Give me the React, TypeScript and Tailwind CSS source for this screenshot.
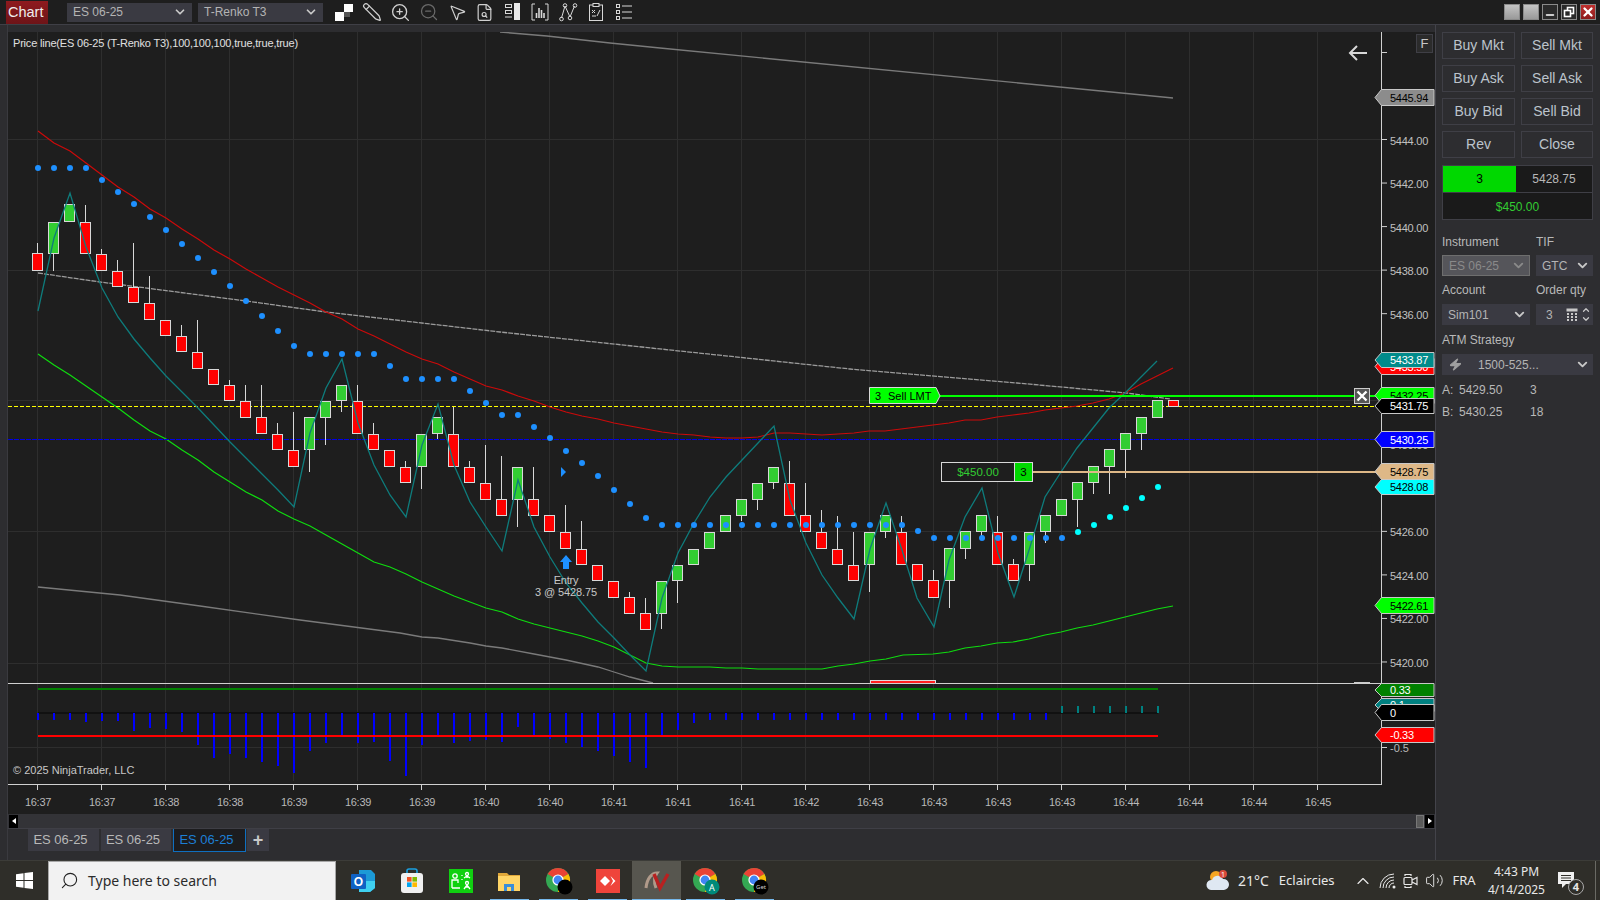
import React from "react";
import {
  ChevronDown, ChevronUp, Pencil, ZoomIn, ZoomOut, MousePointer2, FileSearch, Zap, Search, ChevronUp as Caret, Volume2, X, Minus,
} from "lucide-react";

type Bar = [string, number, number, number?, number?];
const bars: Bar[] = [
  ["r",253,270,243],["g",222,253,0,271],["g",204,221],["r",222,253,205],["r",254,270,249],["r",271,286,260],["r",287,302,243],["r",303,319,276],
  ["r",320,335],["r",336,351,325],["r",352,368,320],["r",369,384],["r",385,400,380],["r",401,417,385],["r",417,433,385],["r",434,449,423],
  ["r",450,466,412],["g",417,449,0,472],["g",401,417,0,445],["g",385,400,0,412],["r",401,433,385],["r",434,449,423],["r",450,466],["r",467,482,461],
  ["g",434,466,0,489],["g",417,433,0,439],["r",434,466,407],["r",467,482,461],["r",483,499,445],["r",499,515,456],["g",467,499,0,527],["r",499,515,467],
  ["r",515,531],["r",532,548,505],["r",549,564,521],["r",565,580],["r",581,597],["r",597,613,592],["r",613,629,598],["g",581,613,0,629],
  ["g",565,580,0,603],["g",549,564],["g",532,548],["g",515,531],["g",499,515,0,521],["g",483,499,0,510],["g",467,482,0,489],["r",483,515,461],
  ["r",515,531,483],["r",532,548,510],["r",549,564,516],["r",565,580,532],["g",532,564,0,592],["g",515,531,0,538],["r",532,564,516],["r",564,580],
  ["r",580,597,570],["g",548,580,0,608],["g",531,548,0,559],["g",515,531,0,536],["r",532,564,516],["r",564,580,559],["g",532,564,0,581],["g",515,531,0,543],
  ["g",499,515],["g",482,499,0,527],["g",466,482,0,494],["g",449,466,0,494],["g",433,449,0,478],["g",417,433,0,450],["g",400,417],["r",400,406],
];

const rep = (v: number, n: number) => Array.from({ length: n }, () => v);
const dots = [
  ...rep(168,4),180,192,204,217,230,244,258,272,286,301,316,331,346,...rep(354,5),366,...rep(379,4),391,403,415,415,427,438,451,463,476,490,504,518,
  ...rep(525,16),531,...rep(538,9),
];
const cyanDots: [number, number][] = [[1078,532],[1094,525],[1110,517],[1126,508],[1142,498],[1158,487]];

const redLine = "38,131 54,143 70,151 86,163 102,175 118,187 134,197 150,209 166,218 182,229 198,239 214,250 230,259 246,269 262,278 278,287 294,295 310,303 326,312 342,319 358,329 374,336 390,344 406,352 422,359 438,364 454,372 470,379 486,386 502,390 518,396 534,401 550,407 566,412 582,416 598,419 614,423 630,426 646,429 662,432 678,434 694,435 710,437 726,438 742,438 758,437 774,433 790,433 806,434 822,435 838,434 854,433 869,431 885,431 901,429 917,427 933,425 949,423 965,420 981,420 997,417 1013,415 1029,413 1045,410 1061,408 1077,406 1093,403 1109,399 1125,393 1141,384 1157,376 1173,368";
const tealLine = "38,311 54,238 70,193 86,247 102,288 118,317 134,339 150,358 166,376 182,392 198,408 214,425 230,442 246,458 262,474 278,490 294,507 310,433 326,388 342,359 358,423 374,465 390,495 406,517 422,445 438,404 454,465 470,502 486,527 502,551 518,480 534,527 550,557 566,583 582,603 598,622 614,638 630,655 646,671 662,598 678,553 694,523 710,497 726,477 742,460 758,443 774,426 790,500 806,543 822,575 838,598 854,619 870,549 886,503 902,550 917,598 934,627 949,560 965,517 982,488 998,553 1014,597 1030,547 1045,497 1061,472 1077,448 1093,428 1109,408 1125,393 1141,377 1157,361";
const greenLine = "38,354 54,365 70,375 86,386 102,397 118,408 134,420 150,431 166,439 182,450 198,460 214,472 230,482 246,492 262,500 278,511 294,519 310,526 326,535 342,544 358,553 374,562 390,567 406,574 422,582 438,589 454,596 470,602 486,608 502,612 518,619 534,624 550,628 566,632 582,636 598,641 614,647 630,655 646,663 662,666 678,667 710,667 726,668 742,668 758,669 822,669 838,666 854,664 870,661 886,659 903,655 933,654 949,652 965,648 981,646 997,643 1013,642 1029,639 1045,635 1061,632 1077,628 1093,625 1109,621 1125,617 1141,613 1157,609 1173,606";
const greyLow = "38,587 120,595 200,606 300,620 400,633 422,637 438,638 470,643 486,646 502,648 534,654 566,660 598,667 614,672 630,677 653,683";

const hist = [720,720,720,722,721,721,731,728,729,732,745,758,754,758,762,766,773,751,743,736,743,742,761,776,745,735,743,741,740,742,727,735,739,743,747,751,756,762,768,737,730,723];

const priceY = (p: number) => 139.5 + (5444 - p) * 21.77;
const times = ["16:37","16:37","16:38","16:38","16:39","16:39","16:39","16:40","16:40","16:41","16:41","16:41","16:42","16:43","16:43","16:43","16:43","16:44","16:44","16:44","16:45"];
const ticks = [5444,5442,5440,5438,5436,5434,5432,5430,5428,5426,5424,5422,5420];
const gridX = times.map((_, i) => 37.5 + 64 * i);

const tags: [number, number, string, string, string][] = [
  [89,106,"#8c8c8c","#000","5445.94"],
  [358,375,"#ff0000","#fff","5433.50"],
  [352,368,"#008b8b","#fff","5433.87"],
  [387,404,"#00ff00","#000","5432.25"],
  [398,414,"#000000","#fff","5431.75"],
  [431,448,"#0000ff","#fff","5430.25"],
  [463,480,"#deb887","#000","5428.75"],
  [479,495,"#00ffff","#000","5428.08"],
  [597,614,"#00ff00","#000","5422.61"],
  [683,697,"#008000","#fff","0.33"],
  [698,712,"#008080","#fff","0.1"],
  [704,721,"#000000","#fff","0"],
  [727,743,"#ff0000","#fff","-0.33"],
];

function Chart() {
  return (
    <svg viewBox="8 32 1427 782" className="block h-[782px] w-[1427px] bg-[#1e1e1e] text-[11px]">
      {gridX.map((x) => (
        <line key={x} x1={x} x2={x} y1={32} y2={781} stroke="#2e2e2e" />
      ))}
      {[139.5, 270.5, 400.5, 531.5, 663.5, 747.5].map((y) => (
        <line key={y} x1={8} x2={1381} y1={y} y2={y} stroke="#2e2e2e" />
      ))}
      <polyline points="500,32 547,36 610,43 660,48 1173,98" fill="none" stroke="#7a7a7a" strokeWidth={1.4} />
      <polyline points="38,273 100,282 246,301 326,312 500,332 850,369 1017,383 1127,393 1170,399" fill="none" stroke="#9c9c9c" strokeWidth={1.3} strokeDasharray="5 1" />
      <polyline points={greyLow} fill="none" stroke="#7a7a7a" strokeWidth={1.3} />
      <polyline points={greenLine} fill="none" stroke="#0fdc0f" strokeWidth={1.2} />

      <line x1={8} x2={1381} y1={439.5} y2={439.5} stroke="#0000e6" strokeDasharray="5 1" />
      <line x1={8} x2={1381} y1={406.5} y2={406.5} stroke="#ffff00" strokeDasharray="4 2" />

      {bars.map(([c, top, bot, wt, wb], i) => {
        const cx = 37.5 + 16 * i;
        return (
          <g key={i}>
            {wt ? <line x1={cx} x2={cx} y1={wt} y2={top} stroke="#d8d8d8" /> : null}
            {wb ? <line x1={cx} x2={cx} y1={bot} y2={wb} stroke="#d8d8d8" /> : null}
            <rect x={cx - 5} y={top + 0.5} width={10} height={bot - top} fill={c === "r" ? "#ff0000" : "#32cd32"} stroke="#d8d8d8" />
          </g>
        );
      })}

      <polyline points={redLine} fill="none" stroke="#cc0a0a" strokeWidth={1.2} />
      <polyline points={tealLine} fill="none" stroke="#0e7c7c" strokeWidth={1.3} />

      {dots.map((y, i) => (
        <circle key={i} cx={38 + 16 * i} cy={y} r={3} fill="#1e90ff" />
      ))}
      {cyanDots.map(([x, y]) => (
        <circle key={x} cx={x} cy={y} r={3} fill="#00ffff" />
      ))}

      <polygon points="561,467 566,472 561,477" fill="#1e90ff" />
      <polygon points="566,555 572,562 569,562 569,569 563,569 563,562 560,562" fill="#1e90ff" />
      <text x={566} y={584} textAnchor="middle" fill="#c8c8c8" className="tracking-[-0.2px]">Entry</text>
      <text x={566} y={596} textAnchor="middle" fill="#c8c8c8" className="tracking-[-0.1px]">3 @ 5428.75</text>

      <line x1={940} x2={1381} y1={396} y2={396} stroke="#00ff00" strokeWidth={2} />
      <polygon points="869.5,387.5 936,387.5 940,396 936,403.5 869.5,403.5" fill="#00ff00" stroke="#d8d8d8" />
      <text x={875} y={399.5} fill="#000" className="text-[11px]">3</text>
      <text x={888} y={399.5} fill="#000" className="text-[11px]">Sell LMT</text>

      <line x1={1033} x2={1381} y1={472} y2={472} stroke="#deb887" strokeWidth={2} />
      <rect x={941.5} y={462.5} width={73} height={19} fill="#1e1e1e" stroke="#d8d8d8" />
      <rect x={1014.5} y={462.5} width={18} height={19} fill="#00d800" stroke="#d8d8d8" />
      <text x={978} y={476} textAnchor="middle" fill="#32cd32" className="text-[11.5px]">$450.00</text>
      <text x={1023.5} y={476} textAnchor="middle" fill="#000" className="text-[11.5px]">3</text>

      <rect x={1354.5} y={388.5} width={15} height={15} fill="#555" stroke="#ccc" />
      <path d="M1357.5 391.5 L1366.5 400.5 M1366.5 391.5 L1357.5 400.5" stroke="#fff" strokeWidth={2.4} />

      <text x={13} y={47} fill="#e0e0e0" className="tracking-[-0.19px]">Price line(ES 06-25 (T-Renko T3),100,100,100,true,true,true)</text>

      {/* sub panel */}
      <rect x={870.5} y={680.5} width={65} height={3} fill="#ff2020" stroke="#ddd" />
      <rect x={1354} y={682} width={16} height={1.5} fill="#ccc" />
      <line x1={8} x2={1381} y1={683.5} y2={683.5} stroke="#d0d0d0" />
      <line x1={38} x2={1158} y1={689} y2={689} stroke="#008000" strokeWidth={2} />
      <line x1={38} x2={1158} y1={713} y2={713} stroke="#111" strokeWidth={2} />
      {hist.map((y, i) => (
        <rect key={i} x={37 + 16 * i} y={713} width={2} height={y - 713} fill="#0000ff" />
      ))}
      {Array.from({ length: 22 }, (_, i) => (
        <rect key={i} x={709 + 16 * i} y={713} width={2} height={7} fill="#0000ff" />
      ))}
      {Array.from({ length: 7 }, (_, i) => (
        <rect key={i} x={1061 + 16 * i} y={706} width={2} height={7} fill="#008080" />
      ))}
      <line x1={38} x2={1158} y1={736} y2={736} stroke="#ff0000" strokeWidth={2} />
      <text x={13} y={774} fill="#c8c8c8">© 2025 NinjaTrader, LLC</text>

      {/* axes */}
      <line x1={1381.5} x2={1381.5} y1={32} y2={785} stroke="#d0d0d0" />
      <line x1={8} x2={1382} y1={784.5} y2={784.5} stroke="#d0d0d0" />
      {gridX.map((x) => (
        <line key={x} x1={x} x2={x} y1={785} y2={790} stroke="#d0d0d0" />
      ))}
      {times.map((t, i) => (
        <text key={i} x={gridX[i] + 0.5} y={806} textAnchor="middle" fill="#b8b8b8" className="tracking-[-0.3px]">{t}</text>
      ))}
      <line x1={1382} x2={1387} y1={52.5} y2={52.5} stroke="#d0d0d0" />
      <line x1={1382} x2={1387} y1={747.5} y2={747.5} stroke="#d0d0d0" />
      <text x={1390} y={752} fill="#b8b8b8">-0.5</text>
      {ticks.map((p) => {
        const y = priceY(p);
        return (
          <g key={p}>
            <line x1={1382} x2={1387} y1={y} y2={y} stroke="#d0d0d0" />
            <text x={1390} y={y + 5} fill="#c0c0c0" className="tracking-[-0.25px]">{p.toFixed(2)}</text>
          </g>
        );
      })}
      {tags.map(([t, b, fill, color, label]) => (
        <g key={label}>
          <polygon points={`1375,${(t + b) / 2} 1381.5,${t + 0.5} 1434,${t + 0.5} 1434,${b - 0.5} 1381.5,${b - 0.5}`} fill={fill} stroke="#c8c8c8" />
          <text x={1390} y={(t + b) / 2 + 4} fill={color} className="tracking-[-0.25px]">{label}</text>
        </g>
      ))}
      {/* arrow + F */}
      <rect x={1416.5} y={34.5} width={16} height={18} fill="#2b2b2b" stroke="#3f3f46" />
      <text x={1424.5} y={48} textAnchor="middle" fill="#c8c8c8" className="text-[13px]">F</text>
      <path d="M1367 53 H1350 M1357 46 L1350 53 L1357 60" fill="none" stroke="#d8d8d8" strokeWidth={2} />
    </svg>
  );
}

function Dropdown({ label, w }: { label: string; w: string }) {
  return (
    <div className={`flex h-[19px] items-center justify-between bg-[#3a3a42] pl-[6px] pr-[5px] text-[12px] text-[#b4b4b4] ${w}`}>
      <span>{label}</span>
      <ChevronDown size={14} strokeWidth={3} className="text-[#c8c8c8]" />
    </div>
  );
}

function ToolIcons() {
  const c = "shrink-0";
  return (
    <div className="ml-[11px] flex items-center gap-[8px] text-[#d0d0d0]">
      <svg width="20" height="20" viewBox="0 0 20 20" className={c}><rect x="1" y="10" width="9" height="9" fill="#fff" /><rect x="10" y="2" width="9" height="8" fill="#fff" /><rect x="10" y="10" width="6" height="5" fill="#555" /></svg>
      <Pencil size={20} strokeWidth={1.5} className="-scale-x-100" />
      <ZoomIn size={21} strokeWidth={1.5} />
      <ZoomOut size={20} strokeWidth={1.5} className="text-[#6a6a6a]" />
      <MousePointer2 size={19} strokeWidth={1.5} className="ml-[1px]" />
      <FileSearch size={19} strokeWidth={1.5} />
      <svg width="20" height="20" viewBox="0 0 20 20" className={c} fill="none" stroke="#d8d8d8"><rect x="3.5" y="2.5" width="6" height="3" /><rect x="3.5" y="8.5" width="6" height="3" /><path d="M3 15 h7" /><rect x="12" y="1" width="6" height="17" fill="#e8e8e8" stroke="none" /></svg>
      <svg width="20" height="20" viewBox="0 0 20 20" className={c} fill="none" stroke="#d8d8d8"><path d="M5 2 H2 V18 H5 M15 2 H18 V18 H15" /><path d="M6.5 16 V11 M9 16 V6 M11.5 16 V8 M14 16 V11" strokeWidth="1.6" /></svg>
      <svg width="20" height="20" viewBox="0 0 20 20" className={c} fill="none" stroke="#d8d8d8"><path d="M3.5 16 L7 4 L12 15 L16.5 4" /><circle cx="3.5" cy="17" r="1.8" /><circle cx="7" cy="3.5" r="1.8" /><circle cx="12" cy="16" r="1.8" /><circle cx="17" cy="3.5" r="1.8" /></svg>
      <svg width="20" height="20" viewBox="0 0 20 20" className={c} fill="none" stroke="#d8d8d8"><rect x="3.5" y="3" width="13" height="15.5" /><rect x="7" y="1.5" width="6" height="3" fill="#1e1e1e" /><path d="M6 8 L9 11 M9 8 L6 11 M11 14 L14 8 M6 14 H10" /></svg>
      <svg width="20" height="20" viewBox="0 0 20 20" className={c} fill="none" stroke="#d8d8d8"><rect x="2.5" y="2.5" width="3" height="3" /><rect x="2.5" y="8.5" width="3" height="3" /><rect x="2.5" y="14.5" width="3" height="3" /><path d="M8 4 H18 M8 10 H18 M8 16 H18" /></svg>
    </div>
  );
}

function WinControls() {
  const b = "flex h-[16px] w-[16px] items-center justify-center border border-[#8a8a8a]";
  return (
    <div className="ml-auto mr-[4px] flex gap-[3px]">
      <div className={`${b} bg-gradient-to-b from-[#c4c4c4] to-[#9a9a9a]`} />
      <div className={`${b} bg-gradient-to-b from-[#c4c4c4] to-[#9a9a9a]`} />
      <div className={`${b} bg-[#2a2a2a]`}><Minus size={12} strokeWidth={3} className="mt-[5px] text-white" /></div>
      <div className={`${b} bg-[#2a2a2a]`}>
        <svg width="12" height="12" viewBox="0 0 12 12" fill="none" stroke="#fff" strokeWidth="1.6"><rect x="4.5" y="1.5" width="6" height="6" /><rect x="1.5" y="4.5" width="6" height="6" fill="#2a2a2a" /></svg>
      </div>
      <div className={`${b} bg-gradient-to-b from-[#c0302e] to-[#8c1c1c]`}><X size={14} strokeWidth={4} className="text-white" /></div>
    </div>
  );
}

function TradeBtn({ t }: { t: string }) {
  return (
    <div className="flex h-[27px] items-center justify-center border border-[#3f3f46] text-[14px] text-[#bcc4cc]">{t}</div>
  );
}

function Select({ label, w, dim }: { label: string; w: string; dim?: boolean }) {
  return (
    <div className={`flex h-[21px] items-center justify-between pl-[6px] pr-[3px] text-[12px] ${w} ${dim ? "border border-[#6e6e6e] bg-[#55555a] text-[#8a8a8a]" : "bg-[#3a3a42] text-[#b4b4b4]"}`}>
      <span>{label}</span>
      <ChevronDown size={15} strokeWidth={3} className={dim ? "text-[#8a8a8a]" : "text-[#c8c8c8]"} />
    </div>
  );
}

function RightPanel() {
  return (
    <aside className="flex w-[165px] shrink-0 flex-col border-l border-[#43434a] bg-[#2d2d30] pl-[6px] pr-[7px] pt-[7px] text-[12px] text-[#b8b8b8]">
      <div className="grid grid-cols-[73px_72px] gap-x-[6px] gap-y-[6px]">
        {["Buy Mkt", "Sell Mkt", "Buy Ask", "Sell Ask", "Buy Bid", "Sell Bid", "Rev", "Close"].map((t) => (
          <TradeBtn key={t} t={t} />
        ))}
      </div>
      <div className="mt-[7px] h-[55px] w-[151px] border border-[#3f3f46]">
        <div className="flex h-[27px] border-b border-[#3f3f46] text-[12px]">
          <div className="flex w-[73px] items-center justify-center bg-[#00d800] text-black">3</div>
          <div className="flex flex-1 items-center justify-center bg-[#1a1a1a] text-[#b8b8b8]">5428.75</div>
        </div>
        <div className="flex h-[26px] items-center justify-center bg-[#1a1a1a] pt-[2px] text-[#32cd32]">$450.00</div>
      </div>
      <div className="mt-[15px] flex gap-[6px] leading-[14px]"><span className="w-[88px]">Instrument</span><span>TIF</span></div>
      <div className="mt-[6px] flex gap-[6px]"><Select label="ES 06-25" w="w-[88px]" dim /><Select label="GTC" w="w-[57px]" /></div>
      <div className="mt-[7px] flex gap-[6px] leading-[14px]"><span className="w-[88px]">Account</span><span>Order qty</span></div>
      <div className="mt-[7px] flex gap-[6px]">
        <Select label="Sim101" w="w-[88px]" />
        <div className="flex h-[21px] w-[57px] items-center bg-[#3a3a42] pl-[10px] pr-[2px] text-[#b4b4b4]">
          <span className="mr-auto">3</span>
          <svg width="12" height="13" viewBox="0 0 12 13" fill="#c8c8c8"><rect x="0.5" y="0.5" width="11" height="3" /><path d="M1 5h2v2H1zM5 5h2v2H5zM9 5h2v2H9zM1 8h2v2H1zM5 8h2v2H5zM9 8h2v2H9zM1 11h2v2H1zM5 11h2v2H5zM9 11h2v2H9z" /></svg>
          <div className="ml-[3px] flex flex-col">
            <ChevronUp size={10} strokeWidth={3} className="-mb-[1px] text-[#c8c8c8]" />
            <ChevronDown size={10} strokeWidth={3} className="text-[#c8c8c8]" />
          </div>
        </div>
      </div>
      <div className="mt-[8px] leading-[14px]">ATM Strategy</div>
      <div className="mt-[7px] flex h-[21px] w-[151px] items-center bg-[#3a3a42] pl-[7px] pr-[3px] text-[#b4b4b4]">
        <Zap size={13} className="-skew-x-12 fill-[#a0a0a0] text-[#a0a0a0]" />
        <span className="ml-[16px] text-[12px]">1500-525...</span>
        <ChevronDown size={15} strokeWidth={3} className="ml-auto text-[#c8c8c8]" />
      </div>
      <div className="mt-[8px] flex h-[14px] items-center"><span className="w-[17px]">A:</span><span className="w-[71px]">5429.50</span><span>3</span></div>
      <div className="mt-[8px] flex h-[14px] items-center"><span className="w-[17px]">B:</span><span className="w-[71px]">5430.25</span><span>18</span></div>
    </aside>
  );
}

function ChromeIcon({ children }: { children?: React.ReactNode }) {
  return (
    <svg width="28" height="28" viewBox="0 0 28 28">
      <circle cx="13" cy="13" r="12" fill="#34a853" />
      <path d="M13 13 L2.6 7 A12 12 0 0 1 23.4 7 Z" fill="#ea4335" />
      <path d="M13 13 L23.4 7 A12 12 0 0 1 13 25 Z" fill="#fbbc05" />
      <circle cx="13" cy="13" r="5.6" fill="#fff" />
      <circle cx="13" cy="13" r="4.4" fill="#4285f4" />
      {children}
    </svg>
  );
}

function TaskIcon({ children, on, hi }: { children: React.ReactNode; on?: boolean; hi?: boolean }) {
  return (
    <div className={`relative flex h-[40px] w-[49px] items-center justify-center ${hi ? "bg-[#57564f]" : ""}`}>
      {children}
      {on ? <div className={`absolute bottom-0 h-[2px] bg-[#76b9ed] ${hi ? "inset-x-0" : "inset-x-[5px]"}`} /> : null}
    </div>
  );
}

function Taskbar() {
  return (
    <footer className="flex h-[40px] items-center border-t border-[#3c3c38] bg-[#2f2e29] font-['Noto_Sans',sans-serif] text-[#e8e8e8]">
      <div className="flex w-[48px] justify-center">
        <svg width="17" height="17" viewBox="0 0 17 17" fill="#fff"><path d="M0 2.3 7.5 1.2V8H0zM8.5 1.1 17 0V8H8.5zM0 9H7.5V15.8L0 14.7zM8.5 9H17V17L8.5 15.9z" /></svg>
      </div>
      <div className="flex h-[40px] w-[288px] items-center border border-[#a8a8a8] bg-[#f2f2f2] pl-[11px] text-[14px] text-[#2b2b2b]">
        <Search size={19} strokeWidth={1.4} className="-scale-x-100 text-[#222]" />
        <span className="ml-[9px]">Type here to search</span>
      </div>
      <div className="ml-[2px] flex">
        <TaskIcon>
          <svg width="26" height="24" viewBox="0 0 26 24">
            <path d="M9 1 H21 L25 5 V19 L20 23 H9 Z" fill="#1c9ad6" />
            <path d="M9 12 H25 V19 L20 23 H9 Z" fill="#3fd0f0" />
            <rect x="1" y="5" width="15" height="15" rx="1" fill="#0f62c4" />
            <text x="8.5" y="17" textAnchor="middle" fill="#fff" className="font-['Liberation_Sans'] text-[12px] font-bold">O</text>
          </svg>
        </TaskIcon>
        <TaskIcon>
          <svg width="24" height="26" viewBox="0 0 24 26">
            <path d="M7 6 V3 A2 2 0 0 1 9 1 H15 A2 2 0 0 1 17 3 V6" fill="none" stroke="#1aa0e0" strokeWidth="1.6" />
            <rect x="1" y="5" width="22" height="20" rx="3" fill="#f0f0f0" />
            <rect x="7" y="9" width="4.6" height="4.6" fill="#f25022" /><rect x="12.4" y="9" width="4.6" height="4.6" fill="#7fba00" />
            <rect x="7" y="14.4" width="4.6" height="4.6" fill="#00a4ef" /><rect x="12.4" y="14.4" width="4.6" height="4.6" fill="#ffb900" />
          </svg>
        </TaskIcon>
        <TaskIcon>
          <svg width="24" height="24" viewBox="0 0 24 24" fill="none" stroke="#fff" strokeWidth="1.3">
            <rect width="24" height="24" fill="#10d010" stroke="none" />
            <circle cx="6" cy="7" r="2.2" /><path d="M3 19 V11 H9 V14 M3 19 H11" />
            <circle cx="18" cy="5" r="1.5" /><path d="M15 9 L18 7 L21 9 M18 7 V9" />
            <circle cx="18" cy="14" r="1.5" /><path d="M15 20 L18 16 L21 20 M18 16 V19" />
            <path d="M13 6 v1 M13 10 v1" />
          </svg>
        </TaskIcon>
        <TaskIcon on>
          <svg width="24" height="22" viewBox="0 0 24 22">
            <path d="M0 3 H9 L11 5 H22 V21 H0 Z" fill="#e0a83a" />
            <path d="M0 6 H22 V21 H0 Z" fill="#ffd566" />
            <path d="M6 21 V14 H16 V21 H13 V17 H9 V21 Z" fill="#3a8ed8" />
          </svg>
        </TaskIcon>
        <TaskIcon on><ChromeIcon><circle cx="20" cy="20" r="7.5" fill="#000" /></ChromeIcon></TaskIcon>
        <TaskIcon on>
          <svg width="24" height="24" viewBox="0 0 24 24"><rect width="24" height="24" fill="#ef443b" /><path d="M4 12 L9 7 L14 12 L9 17 Z" fill="#fff" /><path d="M14.5 7 L19.5 12 L14.5 17 L17 12 Z" fill="#fff" /></svg>
        </TaskIcon>
        <TaskIcon on hi>
          <svg width="26" height="22" viewBox="0 0 26 22" fill="none"><path d="M2 18 C3 8 8 3 13 3 C10 7 10 13 12 18" stroke="#b09a8a" strokeWidth="3" /><path d="M10 4 L16 18 L24 4" stroke="#b82020" strokeWidth="3.4" /></svg>
        </TaskIcon>
        <TaskIcon on><ChromeIcon><circle cx="20" cy="20" r="7.5" fill="#008a7a" /><text x="20" y="23.5" textAnchor="middle" fill="#fff" className="text-[9px]">A</text></ChromeIcon></TaskIcon>
        <TaskIcon on><ChromeIcon><circle cx="20" cy="20" r="7.5" fill="#000" /><text x="20" y="22" textAnchor="middle" fill="#ccc" className="text-[6px]">Get</text></ChromeIcon></TaskIcon>
      </div>
      <div className="ml-auto flex h-full items-center">
        <div className="flex w-[146px] items-center text-[14px]">
          <svg width="26" height="26" viewBox="0 0 26 26" className="shrink-0">
            <circle cx="11" cy="9" r="6" fill="#f5a623" />
            <path d="M6 22 A5 5 0 0 1 7 12 A6 6 0 0 1 18 11 A5.5 5.5 0 0 1 19 22 Z" fill="#dfe8f2" />
            <circle cx="18" cy="6" r="4" fill="#d84a3a" />
            <text x="18" y="9" textAnchor="middle" fill="#fff" className="text-[7px]">1</text>
          </svg>
          <span className="ml-[7px]">21°C</span>
          <span className="ml-[10px] text-[13px]">Eclaircies</span>
        </div>
        <div className="flex w-[24px] justify-center"><Caret size={20} strokeWidth={1.4} /></div>
        <div className="flex w-[26px] justify-center">
          <svg width="18" height="16" viewBox="0 0 18 16" fill="none" stroke="#e8e8e8"><path d="M1 15 A14 14 0 0 1 15 1 M4 15 A11 11 0 0 1 15 4 M7 15 A8 8 0 0 1 15 7 M10 15 A5 5 0 0 1 15 10" /><circle cx="15" cy="14" r="1.5" fill="#e8e8e8" stroke="none" /></svg>
        </div>
        <div className="flex w-[20px] justify-center">
          <svg width="18" height="18" viewBox="0 0 18 18" fill="none" stroke="#e8e8e8" strokeWidth="1.2"><path d="M3 4 V2.5 H9 V4 M3 14 V15.5 H9 V14" /><rect x="2" y="5.5" width="8" height="7" rx="1" /><path d="M10 8 L15 5.5 V12.5 L10 10" /></svg>
        </div>
        <div className="flex w-[26px] justify-center"><Volume2 size={19} strokeWidth={1.2} /></div>
        <div className="w-[34px] text-center text-[13px]">FRA</div>
        <div className="flex w-[68px] flex-col items-center pl-[3px] text-[12px] leading-[18px]">
          <span>4:43 PM</span>
          <span>4/14/2025</span>
        </div>
        <div className="relative flex w-[36px] justify-center">
          <svg width="18" height="17" viewBox="0 0 18 17" fill="#f0f0f0"><path d="M0 0 H16 V12 H8 L4 16 V12 H0 Z" /><path d="M3 3.5 H13 M3 6 H13 M3 8.5 H13" stroke="#2f2e29" /></svg>
          <div className="absolute left-[19px] top-[7px] flex h-[16px] w-[16px] items-center justify-center rounded-full border border-[#aaa] bg-[#2f2e29] text-[11px] font-bold">4</div>
        </div>
        <div className="ml-[10px] h-full w-[5px] border-l border-[#6a6a64]" />
      </div>
    </footer>
  );
}

export default function App() {
  return (
    <div className="flex h-[900px] w-[1600px] flex-col overflow-hidden bg-[#2d2d30] font-['Liberation_Sans',Arial,sans-serif]">
      <header className="flex h-[25px] shrink-0 items-center border-b border-[#3f3f46] bg-[#1e1e1e]">
        <div className="ml-[6px] flex h-[23px] w-[42px] items-center bg-gradient-to-b from-[#8f1a1e] to-[#6e1418] pl-[2px] pt-[1px] text-[14.5px] text-[#eeeeee]">Chart</div>
        <div className="ml-[19px] flex gap-[6px]">
          <Dropdown label="ES 06-25" w="w-[125px]" />
          <Dropdown label="T-Renko T3" w="w-[125px]" />
        </div>
        <ToolIcons />
        <WinControls />
      </header>
      <main className="flex h-[835px] shrink-0">
        <div className="w-[8px] shrink-0 border-r border-[#3a3a3f]" />
        <div className="flex w-[1427px] shrink-0 flex-col">
          <div className="h-[7px] shrink-0" />
          <Chart />
          <div className="flex h-[14px] shrink-0 items-center justify-between bg-[#333337] pl-[1px] pr-[1px]">
            <div className="flex h-[13px] w-[9px] items-center justify-center bg-black">
              <div className="h-0 w-0 border-y-[3px] border-r-[4px] border-y-transparent border-r-white" />
            </div>
            <div className="flex items-center gap-[1px]">
              <div className="h-[13px] w-[8px] border border-[#777] bg-[#5a5a5a]" />
              <div className="flex h-[13px] w-[9px] items-center justify-center bg-black">
                <div className="h-0 w-0 border-y-[3px] border-l-[4px] border-y-transparent border-l-white" />
              </div>
            </div>
          </div>
          <div className="flex h-[32px] gap-[2px] border-t border-[#3f3f46] pl-[20px] text-[13px]">
            <div className="flex h-[22px] w-[71px] items-center justify-center bg-[#3a3a42] pr-[6px] text-[#b8b8b8]">ES 06-25</div>
            <div className="flex h-[22px] w-[70px] items-center justify-center bg-[#3a3a42] pr-[6px] text-[#b8b8b8]">ES 06-25</div>
            <div className="flex h-[23px] w-[73px] items-center justify-center border-x border-b border-[#0f6fc0] bg-[#1c1c1e] pr-[6px] text-[#1c7fd6]">ES 06-25</div>
            <div className="-ml-[1px] flex h-[22px] w-[22px] items-center justify-center bg-[#3a3a42] text-[18px] font-bold text-[#c8c8c8]">+</div>
          </div>
        </div>
        <RightPanel />
      </main>
      <Taskbar />
    </div>
  );
}
